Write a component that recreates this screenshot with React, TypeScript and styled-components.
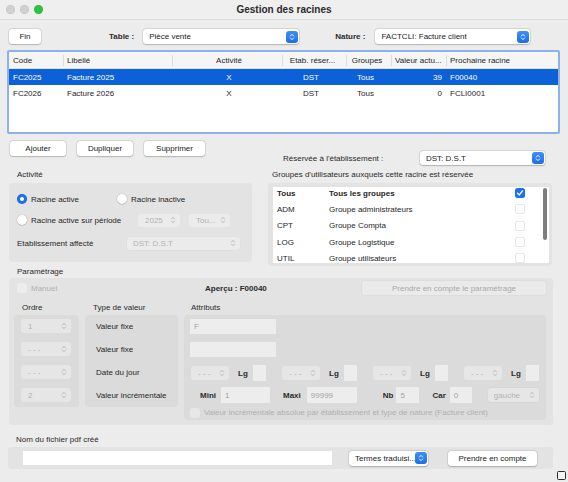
import React from "react";
import styled, { createGlobalStyle } from "styled-components";

const Global = createGlobalStyle`
  html, body { margin: 0; padding: 0; background: #ececec; }
  body {
    font-family: "Liberation Sans", Arial, Helvetica, sans-serif;
    font-size: 8px;
    color: #262626;
  }
  * { box-sizing: border-box; }
`;

const Window = styled.div`
  position: relative;
  width: 568px;
  height: 482px;
  overflow: hidden;
  background: #ececec;
  display: flex;
  flex-direction: column;
`;

const TitleBar = styled.div`
  flex: none;
  height: 20px;
  display: grid;
  grid-template-columns: 1fr auto 1fr;
  align-items: center;
  background: #efefef;
  border-bottom: 1px solid #dadada;
`;

const Lights = styled.div`
  display: flex;
  gap: 5px;
  padding-left: 6px;
`;

const Light = styled.span<{ $c: string }>`
  width: 9px;
  height: 9px;
  border-radius: 50%;
  background: ${(p) => p.$c};
  box-shadow: inset 0 0 0 0.5px rgba(0, 0, 0, 0.08);
`;

const Title = styled.div`
  font-size: 10px;
  font-weight: bold;
  color: #2a2a2a;
`;

const TopRow = styled.div`
  display: flex;
  align-items: center;
  height: 15px;
  margin-top: 9px;
`;

const PushButton = styled.div<{ $w: number; $ml?: number; $disabled?: boolean; $h?: number }>`
  flex: none;
  width: ${(p) => p.$w}px;
  height: ${(p) => p.$h ?? 15}px;
  margin-left: ${(p) => p.$ml ?? 0}px;
  display: flex;
  align-items: center;
  justify-content: center;
  border-radius: 3px;
  background: ${(p) => (p.$disabled ? "#eaeaea" : "#ffffff")};
  color: ${(p) => (p.$disabled ? "#a9a9a9" : "#222")};
  box-shadow: ${(p) =>
    p.$disabled
      ? "0 0 0 0.5px rgba(0,0,0,0.05)"
      : "0 0 0 0.5px rgba(0,0,0,0.12), 0 0.5px 1.5px rgba(0,0,0,0.2)"};
  white-space: nowrap;
`;

const BoldLabel = styled.span<{ $ml?: number }>`
  flex: none;
  margin-left: ${(p) => p.$ml ?? 0}px;
  font-weight: bold;
  color: #2a2a2a;
`;

const Select = styled.div<{ $w: number; $ml?: number; $h?: number; $disabled?: boolean }>`
  flex: none;
  width: ${(p) => p.$w}px;
  height: ${(p) => p.$h ?? 15}px;
  margin-left: ${(p) => p.$ml ?? 0}px;
  display: flex;
  align-items: center;
  justify-content: space-between;
  padding: 0 1px 0 6px;
  border-radius: 3px;
  background: ${(p) => (p.$disabled ? "rgba(255,255,255,0.3)" : "#fff")};
  color: ${(p) => (p.$disabled ? "#b3b3b3" : "#222")};
  box-shadow: ${(p) =>
    p.$disabled
      ? "0 0 0 0.5px rgba(0,0,0,0.03)"
      : "0 0 0 0.5px rgba(0,0,0,0.12), 0 0.5px 1.5px rgba(0,0,0,0.2)"};
  white-space: nowrap;
  & > span:first-child {
    overflow: hidden;
  }
`;

const DisabledArrows = styled.span`
  display: flex;
  padding-right: 3px;
`;

const BlueStep = styled.span`
  flex: none;
  width: 12px;
  height: 12px;
  border-radius: 3px;
  background: linear-gradient(#3f8ff8, #1d6fea);
  display: flex;
  align-items: center;
  justify-content: center;
`;

const UpDown = ({ color = "#b7b7b7", h = 8 }: { color?: string; h?: number }) => (
  <svg width={6} height={h} viewBox="0 0 6 9" fill="none" stroke={color} strokeWidth={1.1} strokeLinecap="round" strokeLinejoin="round">
    <path d="M1.2 3.4 L3 1.5 L4.8 3.4" />
    <path d="M1.2 5.6 L3 7.5 L4.8 5.6" />
  </svg>
);

const PopSelect = ({ w, ml, h, text, disabled }: { w: number; ml?: number; h?: number; text: string; disabled?: boolean }) => (
  <Select $w={w} $ml={ml} $h={h} $disabled={disabled}>
    <span>{text}</span>
    {disabled ? (
      <DisabledArrows>
        <UpDown />
      </DisabledArrows>
    ) : (
      <BlueStep>
        <UpDown color="#fff" h={8} />
      </BlueStep>
    )}
  </Select>
);

/* ---------- table ---------- */
const cols = "54px 109px 110px 64px 45px 55px 1fr";

const TableFrame = styled.div`
  margin: 6px 0 0 7px;
  width: 553px;
  height: 84px;
  border: 2px solid #8cb2ec;
  border-radius: 2px;
  background: #fff;
  overflow: hidden;
`;

const THead = styled.div`
  display: grid;
  grid-template-columns: ${cols};
  height: 17px;
  align-items: center;
  background: #f5f5f5;
  border-bottom: 1px solid #e2e2e2;
`;

const TRow = styled.div<{ $sel?: boolean }>`
  display: grid;
  grid-template-columns: ${cols};
  height: 16px;
  align-items: center;
  background: ${(p) => (p.$sel ? "#0c61d9" : "transparent")};
  color: ${(p) => (p.$sel ? "#fff" : "#262626")};
`;

const Cell = styled.div<{ $align?: string; $pl?: number; $pr?: number; $sep?: boolean }>`
  height: 11px;
  line-height: 11px;
  text-align: ${(p) => p.$align ?? "left"};
  padding-left: ${(p) => p.$pl ?? 3}px;
  padding-right: ${(p) => p.$pr ?? 0}px;
  border-left: ${(p) => (p.$sep ? "1px solid #dcdcdc" : "1px solid transparent")};
  white-space: nowrap;
  overflow: hidden;
`;

/* ---------- middle section ---------- */
const MidGrid = styled.div`
  display: grid;
  grid-template-columns: 243px 284px;
  column-gap: 16px;
  margin: 7px 0 0 9px;
  align-items: start;
`;

const Col = styled.div`
  display: flex;
  flex-direction: column;
`;

const ButtonsRow = styled.div`
  display: flex;
  height: 15px;
`;

const SectionLabel = styled.div<{ $mt?: number; $pl?: number; $lh?: number }>`
  margin-top: ${(p) => p.$mt ?? 0}px;
  padding-left: ${(p) => p.$pl ?? 8}px;
  line-height: ${(p) => p.$lh ?? 12}px;
  height: ${(p) => p.$lh ?? 12}px;
  color: #2a2a2a;
  white-space: nowrap;
`;

const GroupBox = styled.div<{ $h: number; $mt?: number }>`
  height: ${(p) => p.$h}px;
  margin-top: ${(p) => p.$mt ?? 2}px;
  background: #e3e3e3;
  border-radius: 4px;
  display: flex;
  flex-direction: column;
`;

const BoxRow = styled.div<{ $mt: number; $h?: number }>`
  display: flex;
  align-items: center;
  height: ${(p) => p.$h ?? 14}px;
  margin-top: ${(p) => p.$mt}px;
  padding-left: 8px;
`;

const Option = styled.label<{ $w?: number }>`
  flex: none;
  width: ${(p) => (p.$w ? `${p.$w}px` : "auto")};
  display: flex;
  align-items: center;
  gap: 4px;
  white-space: nowrap;
`;

const Radio = styled.span<{ $on?: boolean }>`
  flex: none;
  width: 10px;
  height: 10px;
  border-radius: 50%;
  display: flex;
  align-items: center;
  justify-content: center;
  background: ${(p) => (p.$on ? "#1b72ef" : "#fff")};
  box-shadow: ${(p) =>
    p.$on ? "inset 0 0 0 0.5px rgba(0,0,0,0.15)" : "0 0 0 0.5px rgba(0,0,0,0.12), 0 0.5px 1px rgba(0,0,0,0.2)"};
  &::after {
    content: "";
    display: ${(p) => (p.$on ? "block" : "none")};
    width: 4px;
    height: 4px;
    border-radius: 50%;
    background: #fff;
  }
`;

const Spinner = styled.div<{ $w: number; $ml?: number; $h?: number }>`
  flex: none;
  width: ${(p) => p.$w}px;
  height: ${(p) => p.$h ?? 13}px;
  margin-left: ${(p) => p.$ml ?? 0}px;
  display: flex;
  align-items: center;
  justify-content: space-between;
  padding: 0 4px 0 7px;
  border-radius: 3px;
  background: rgba(255, 255, 255, 0.3);
  color: #b3b3b3;
  white-space: nowrap;
`;

const Field = styled.span<{ $w: number }>`
  flex: none;
  width: ${(p) => p.$w}px;
`;

const ReserveRow = styled.div`
  display: flex;
  align-items: center;
  height: 14px;
  margin-top: 10px;
  padding-left: 15px;
`;

const ReserveLabel = styled.span`
  width: 137px;
  color: #2a2a2a;
`;

const GroupsBox = styled.div`
  margin-top: 2px;
  height: 83px;
  background: #e3e3e3;
  border-radius: 4px;
  padding: 4px 3px 3px 5px;
`;

const GroupList = styled.div`
  position: relative;
  height: 76px;
  background: #fff;
  overflow: hidden;
`;

const GroupRows = styled.div`
  margin-top: -2px;
`;

const GroupRow = styled.div<{ $bold?: boolean }>`
  display: grid;
  grid-template-columns: 52px 186px 10px;
  align-items: center;
  height: 16.3px;
  padding-left: 4px;
  font-weight: ${(p) => (p.$bold ? "bold" : "normal")};
`;

const ScrollThumb = styled.div`
  position: absolute;
  right: 2px;
  top: 1px;
  width: 4px;
  height: 52px;
  border-radius: 2px;
  background: #7d7d7d;
`;

const CheckBox = styled.span<{ $on?: boolean; $disabled?: boolean }>`
  flex: none;
  width: 10px;
  height: 10px;
  border-radius: 2.5px;
  display: flex;
  align-items: center;
  justify-content: center;
  background: ${(p) => (p.$on ? "#1b72ef" : p.$disabled ? "rgba(255,255,255,0.35)" : "#fff")};
  box-shadow: ${(p) =>
    p.$on ? "none" : p.$disabled ? "none" : "inset 0 0 0 0.75px #e0e0e0"};
`;

const CheckMark = () => (
  <svg width={8} height={8} viewBox="0 0 8 8" fill="none" stroke="#fff" strokeWidth={1.4} strokeLinecap="round" strokeLinejoin="round">
    <path d="M1.6 4.2 L3.3 5.9 L6.5 1.9" />
  </svg>
);

/* ---------- parametrage ---------- */
const ParamBox = styled.div`
  margin: 1px 0 0 9px;
  width: 544px;
  height: 147px;
  background: #e3e3e3;
  border-radius: 4px;
  padding: 3px 7px 0 5px;
`;

const ParamTop = styled.div`
  display: grid;
  grid-template-columns: 188px 157px 184px;
  align-items: center;
  height: 14px;
  padding-left: 3px;
`;

const Dim = styled.span`
  color: #b0b0b0;
  white-space: nowrap;
`;

const Apercu = styled.span`
  font-weight: bold;
  color: #2a2a2a;
`;

const ParamCols = styled.div`
  display: grid;
  grid-template-columns: 65px 93px 362px;
  column-gap: 6px;
  margin-top: 7px;
  align-items: start;
`;

const SubBox = styled.div<{ $h: number; $pl: number }>`
  height: ${(p) => p.$h}px;
  margin-top: 1px;
  background: #dbdbdb;
  border-radius: 4px;
  padding: 4px 0 0 ${(p) => p.$pl}px;
  display: flex;
  flex-direction: column;
`;

const StackRow = styled.div<{ $mt?: number; $h?: number }>`
  display: flex;
  align-items: center;
  height: ${(p) => p.$h ?? 14}px;
  margin-top: ${(p) => p.$mt ?? 0}px;
  white-space: nowrap;
`;

const TextInput = styled.div<{ $w: number; $h?: number; $ml?: number; $white?: boolean }>`
  flex: none;
  width: ${(p) => p.$w}px;
  height: ${(p) => p.$h ?? 15}px;
  margin-left: ${(p) => p.$ml ?? 0}px;
  display: flex;
  align-items: center;
  padding-left: 4px;
  background: ${(p) => (p.$white ? "#fff" : "#ededed")};
  color: #a3a3a3;
`;

const AttrGrid = styled.div`
  display: grid;
  grid-template-columns: repeat(4, 91px);
  align-items: center;
  height: 16px;
  margin-top: 8px;
  padding-left: 1px;
`;

const AttrGroup = styled.div`
  display: flex;
  align-items: center;
`;

const Nom = styled.div`
  margin: 1px 0 0 8px;
  width: 545px;
  height: 22px;
  background: #e3e3e3;
  border-radius: 4px;
  display: flex;
  align-items: center;
`;

const ResizeGrip = styled.span`
  position: absolute;
  right: 2px;
  bottom: 2px;
  width: 9px;
  height: 9px;
  border: 1.5px solid #2b2b2b;
  border-radius: 1.5px;
  background: #f3f3f3;
`;

const groups = [
  { code: "Tous", name: "Tous les groupes", on: true, bold: true },
  { code: "ADM", name: "Groupe administrateurs" },
  { code: "CPT", name: "Groupe Compta" },
  { code: "LOG", name: "Groupe Logistique" },
  { code: "UTIL", name: "Groupe utilisateurs" },
];

const rows = [
  { code: "FC2025", lib: "Facture 2025", act: "X", etab: "DST", grp: "Tous", val: "39", next: "F00040", sel: true },
  { code: "FC2026", lib: "Facture 2026", act: "X", etab: "DST", grp: "Tous", val: "0", next: "FCLI0001" },
];

export default function App() {
  return (
    <Window>
      <Global />
      <TitleBar>
        <Lights>
          <Light $c="#d0d0d0" />
          <Light $c="#d0d0d0" />
          <Light $c="#2bc440" />
        </Lights>
        <Title>Gestion des racines</Title>
        <span />
      </TitleBar>

      <TopRow>
        <PushButton $w={32} $ml={9}>Fin</PushButton>
        <BoldLabel $ml={68}>Table :</BoldLabel>
        <PopSelect w={156} ml={9} text="Pièce vente" />
        <BoldLabel $ml={36}>Nature :</BoldLabel>
        <PopSelect w={155} ml={10} text="FACTCLI: Facture client" />
      </TopRow>

      <TableFrame>
        <THead>
          <Cell>Code</Cell>
          <Cell $sep>Libellé</Cell>
          <Cell $sep $align="center">Activité</Cell>
          <Cell $sep $align="center" $pr={7}>Etab. réser...</Cell>
          <Cell $sep $align="center" $pr={7}>Groupes</Cell>
          <Cell $sep>Valeur actu...</Cell>
          <Cell $sep>Prochaine racine</Cell>
        </THead>
        {rows.map((r) => (
          <TRow key={r.code} $sel={r.sel}>
            <Cell>{r.code}</Cell>
            <Cell>{r.lib}</Cell>
            <Cell $align="center">{r.act}</Cell>
            <Cell $align="center" $pr={10}>{r.etab}</Cell>
            <Cell $align="center" $pr={10}>{r.grp}</Cell>
            <Cell $align="right" $pr={4}>{r.val}</Cell>
            <Cell>{r.next}</Cell>
          </TRow>
        ))}
      </TableFrame>

      <MidGrid>
        <Col>
          <ButtonsRow>
            <PushButton $w={56} $ml={1}>Ajouter</PushButton>
            <PushButton $w={56} $ml={11}>Dupliquer</PushButton>
            <PushButton $w={61} $ml={11}>Supprimer</PushButton>
          </ButtonsRow>
          <SectionLabel $mt={13}>Activité</SectionLabel>
          <GroupBox $h={79}>
            <BoxRow $mt={9}>
              <Option $w={100}>
                <Radio $on />
                Racine active
              </Option>
              <Option>
                <Radio />
                Racine inactive
              </Option>
            </BoxRow>
            <BoxRow $mt={7}>
              <Option $w={121}>
                <Radio />
                Racine active sur période
              </Option>
              <Spinner $w={42}>
                <span>2025</span>
                <UpDown />
              </Spinner>
              <Spinner $w={41} $ml={9}>
                <span>Tou...</span>
                <UpDown />
              </Spinner>
            </BoxRow>
            <BoxRow $mt={9}>
              <Field $w={110}>Etablissement affecté</Field>
              <PopSelect w={113} h={13} text="DST: D.S.T" disabled />
            </BoxRow>
          </GroupBox>
        </Col>

        <Col>
          <ReserveRow>
            <ReserveLabel>Réservée à l'établissement :</ReserveLabel>
            <PopSelect w={125} h={14} text="DST: D.S.T" />
          </ReserveRow>
          <SectionLabel $mt={4} $pl={4}>Groupes d'utilisateurs auxquels cette racine est réservée</SectionLabel>
          <GroupsBox>
            <GroupList>
              <GroupRows>
                {groups.map((g) => (
                  <GroupRow key={g.code} $bold={g.bold}>
                    <span>{g.code}</span>
                    <span>{g.name}</span>
                    <CheckBox $on={g.on}>{g.on && <CheckMark />}</CheckBox>
                  </GroupRow>
                ))}
              </GroupRows>
              <ScrollThumb />
            </GroupList>
          </GroupsBox>
        </Col>
      </MidGrid>

      <SectionLabel $lh={11} $pl={17}>Paramétrage</SectionLabel>
      <ParamBox>
        <ParamTop>
          <Option>
            <CheckBox $disabled />
            <Dim>Manuel</Dim>
          </Option>
          <Apercu>Aperçu : F00040</Apercu>
          <PushButton $w={184} $h={14} $disabled>
            Prendre en compte le paramétrage
          </PushButton>
        </ParamTop>
        <ParamCols>
          <Col>
            <SectionLabel>Ordre</SectionLabel>
            <SubBox $h={92} $pl={7}>
              {["1", "- - -", "- - -", "2"].map((v, i) => (
                <StackRow key={i} $mt={i === 0 ? 0 : 9}>
                  <Spinner $w={50} $h={14}>
                    <span>{v}</span>
                    <UpDown />
                  </Spinner>
                </StackRow>
              ))}
            </SubBox>
          </Col>
          <Col>
            <SectionLabel>Type de valeur</SectionLabel>
            <SubBox $h={92} $pl={11}>
              {["Valeur fixe", "Valeur fixe", "Date du jour", "Valeur incrémentale"].map((v, i) => (
                <StackRow key={i} $mt={i === 0 ? 0 : 9}>
                  {v}
                </StackRow>
              ))}
            </SubBox>
          </Col>
          <Col>
            <SectionLabel $pl={7}>Attributs</SectionLabel>
            <SubBox $h={105} $pl={6}>
              <StackRow $h={15}>
                <TextInput $w={86}>F</TextInput>
              </StackRow>
              <StackRow $h={15} $mt={8}>
                <TextInput $w={86} />
              </StackRow>
              <AttrGrid>
                {[0, 1, 2, 3].map((i) => (
                  <AttrGroup key={i}>
                    <Spinner $w={38} $h={14}>
                      <span>- - -</span>
                      <UpDown />
                    </Spinner>
                    <BoldLabel $ml={9}>Lg</BoldLabel>
                    <TextInput $w={13} $h={16} $ml={5} />
                  </AttrGroup>
                ))}
              </AttrGrid>
              <StackRow $h={16} $mt={6}>
                <BoldLabel $ml={10}>Mini</BoldLabel>
                <TextInput $w={49} $h={16} $ml={5}>1</TextInput>
                <BoldLabel $ml={13}>Maxi</BoldLabel>
                <TextInput $w={50} $h={16} $ml={6}>99999</TextInput>
                <BoldLabel $ml={26}>Nb</BoldLabel>
                <TextInput $w={23} $h={16} $ml={3}>5</TextInput>
                <BoldLabel $ml={13}>Car</BoldLabel>
                <TextInput $w={22} $h={16} $ml={4}>0</TextInput>
                <PopSelect w={51} h={14} ml={16} text="gauche" disabled />
              </StackRow>
              <StackRow $h={11} $mt={4}>
                <Option>
                  <CheckBox $disabled />
                  <Dim>Valeur incrémentale absolue par établissement et type de nature (Facture client)</Dim>
                </Option>
              </StackRow>
            </SubBox>
          </Col>
        </ParamCols>
      </ParamBox>

      <SectionLabel $mt={9} $pl={16}>Nom du fichier pdf créé</SectionLabel>
      <Nom>
        <TextInput $w={309} $h={14} $ml={15} $white />
        <PopSelect w={79} ml={17} text="Termes traduisi..." />
        <PushButton $w={89} $ml={20}>Prendre en compte</PushButton>
      </Nom>
      <ResizeGrip />
    </Window>
  );
}
